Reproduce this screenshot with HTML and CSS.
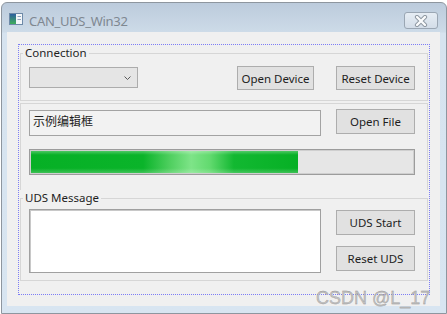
FILE: index.html
```html
<!DOCTYPE html>
<html lang="en">
<head>
  <meta charset="UTF-8">
  <title>CAN_UDS_Win32</title>
  <link rel="stylesheet" href="styles.css">
</head>
<body>
  <div class="window">
    <div class="titlebar">
      <svg class="app-icon" width="14" height="12" viewBox="0 0 14 12">
        <defs>
          <linearGradient id="ico" x1="0" y1="0" x2="0" y2="1">
            <stop offset="0" stop-color="#2c5f9f"/>
            <stop offset="1" stop-color="#3fae5a"/>
          </linearGradient>
        </defs>
        <rect x="0.5" y="0.5" width="13" height="11" fill="#f4f7fa" stroke="#6e8aa8"/>
        <rect x="1" y="1" width="6" height="10" fill="url(#ico)"/>
        <line x1="8.5" y1="3.5" x2="12" y2="3.5" stroke="#8fa6bd"/>
        <line x1="8.5" y1="6.5" x2="12" y2="6.5" stroke="#8fa6bd"/>
      </svg>
      <span class="title">CAN_UDS_Win32</span>
      <div class="close-btn">
        <svg width="14" height="12" viewBox="0 0 14 12">
          <path d="M3 2 L11 10 M11 2 L3 10" stroke="#8c96a0" stroke-width="4.2" stroke-linecap="round"/>
          <path d="M3 2 L11 10 M11 2 L3 10" stroke="#fbfcfd" stroke-width="2.4" stroke-linecap="round"/>
        </svg>
      </div>
    </div>

    <div class="client">
      <div class="focus-frame">
        <fieldset class="group group-conn">
          <legend>Connection</legend>
          <div class="conn-row">
            <div class="combo">
              <svg width="7" height="5" viewBox="0 0 7 5">
                <polyline points="0.5,0.5 3.5,3.5 6.5,0.5" fill="none" stroke="#5a5a5a"/>
              </svg>
            </div>
            <button class="btn btn-open-dev">Open Device</button>
            <button class="btn">Reset Device</button>
          </div>
        </fieldset>

        <div class="group group-file">
          <div class="file-row">
            <div class="edit">示例编辑框</div>
            <button class="btn">Open File</button>
          </div>
          <div class="progress">
            <div class="progress-fill" style="width: 70%"></div>
          </div>
        </div>

        <fieldset class="group group-uds">
          <legend>UDS Message</legend>
          <div class="uds-row">
            <div class="msg-box"></div>
            <div class="btn-col">
              <button class="btn">UDS Start</button>
              <button class="btn">Reset UDS</button>
            </div>
          </div>
        </fieldset>
      </div>
    </div>

    <div class="watermark">CSDN @L_17</div>
  </div>
</body>
</html>
```

FILE: styles.css
```css
*,
*::before,
*::after {
  box-sizing: border-box;
}
body {
  margin: 0;
  width: 447px;
  height: 314px;
  overflow: hidden;
  background: #fff;
  font-family: "Noto Sans", "Noto Sans CJK SC", sans-serif;
  font-size: 11.5px;
  color: #1e1e1e;
}
.window {
  position: relative;
  margin: 2px 0 0 1px;
  width: 446px;
  height: 312px;
  border: 1px solid #8e969f;
  border-radius: 6px 6px 0 0;
  background: linear-gradient(#bccbdc, #cddbe8 29px, #d6e3ef 30px, #d8e5f1);
  display: flex;
  flex-direction: column;
}
.titlebar {
  height: 29px;
  display: flex;
  align-items: flex-start;
  padding: 0 8px 0 7px;
}
.app-icon {
  margin-top: 10px;
}
.title {
  margin: 10px 0 0 6px;
  font-size: 13px;
  line-height: 16px;
  letter-spacing: -0.3px;
  color: #7f8891;
}
.close-btn {
  margin: 9px 0 0 auto;
  width: 34px;
  height: 17px;
  border: 1px solid #9aa6b3;
  border-radius: 3px;
  background: linear-gradient(#e6edf4, #d3dde8);
  display: flex;
  align-items: center;
  justify-content: center;
}
.client {
  flex: 1;
  margin: 0 6px 7px 5px;
  padding: 12px 10px 11px 11px;
  background: #f0f0f0;
}
.focus-frame {
  height: 251px;
  border: 1px dotted #7d7df5;
  padding: 0 1px;
}
.group {
  margin: 0;
  min-width: 0;
  border: 1px solid #d6d6d6;
}
fieldset.group {
  padding: 0 12px 0 2px;
}
legend {
  padding: 0 2px;
  line-height: 16px;
}
.conn-row {
  display: flex;
  align-items: flex-start;
  margin: 5px 0 10px 6px;
}
.combo {
  margin-top: 1px;
  width: 109px;
  height: 21px;
  border: 1px solid #acacac;
  background: #e5e5e5;
  display: flex;
  align-items: center;
  justify-content: flex-end;
  padding: 1px 6px 0 0;
}
.btn {
  font: inherit;
  color: #1e1e1e;
  width: 79px;
  height: 25px;
  padding: 0;
  border: 1px solid #adadad;
  background: #e1e1e1;
}
.conn-row .btn {
  height: 24px;
}
.btn-open-dev {
  width: 77px;
  margin: 0 22px 0 auto;
}
.group-file {
  margin-top: 2px;
  border-bottom: none;
  padding: 5px 12px 15px 8px;
}
.file-row {
  display: flex;
  align-items: flex-start;
  gap: 15px;
}
.edit {
  margin-top: 1px;
  width: 292px;
  height: 26px;
  border: 1px solid #a3a3a3;
  background: #f2f2f2;
  padding: 0 3px;
  font-family: "Noto Sans CJK SC", sans-serif;
  font-size: 12px;
  line-height: 20px;
}
.progress {
  margin-top: 13px;
  height: 26px;
  border: 1px solid #9c9c9c;
  box-shadow: inset 0 0 0 1px #cfcfcf;
  background: #e6e6e6;
  padding: 1px;
}
.progress-fill {
  height: 100%;
  background:
    linear-gradient(rgba(255, 255, 255, 0.28), rgba(255, 255, 255, 0) 18%, rgba(255, 255, 255, 0) 78%, rgba(255, 255, 255, 0.22)),
    linear-gradient(90deg, #06b025 0%, #0ab42a 42%, #4fcf5f 52%, #7ee488 60%, #62da6f 67%, #12b831 76%, #06b025 100%);
}
.uds-row {
  display: flex;
  align-items: flex-start;
  gap: 15px;
  margin: 3px 0 7px 6px;
}
.msg-box {
  width: 292px;
  height: 64px;
  border: 1px solid #a0a0a0;
  box-shadow: inset 1px 1px 0 #c8c8c8;
  background: #fff;
}
.btn-col {
  display: flex;
  flex-direction: column;
  gap: 11px;
  padding-top: 1px;
}
.watermark {
  position: absolute;
  left: 314px;
  top: 285px;
  font-family: "Liberation Sans", sans-serif;
  font-size: 18px;
  line-height: 20px;
  color: #c2c2c2;
  -webkit-text-stroke: 0.3px #929292;
}
```
